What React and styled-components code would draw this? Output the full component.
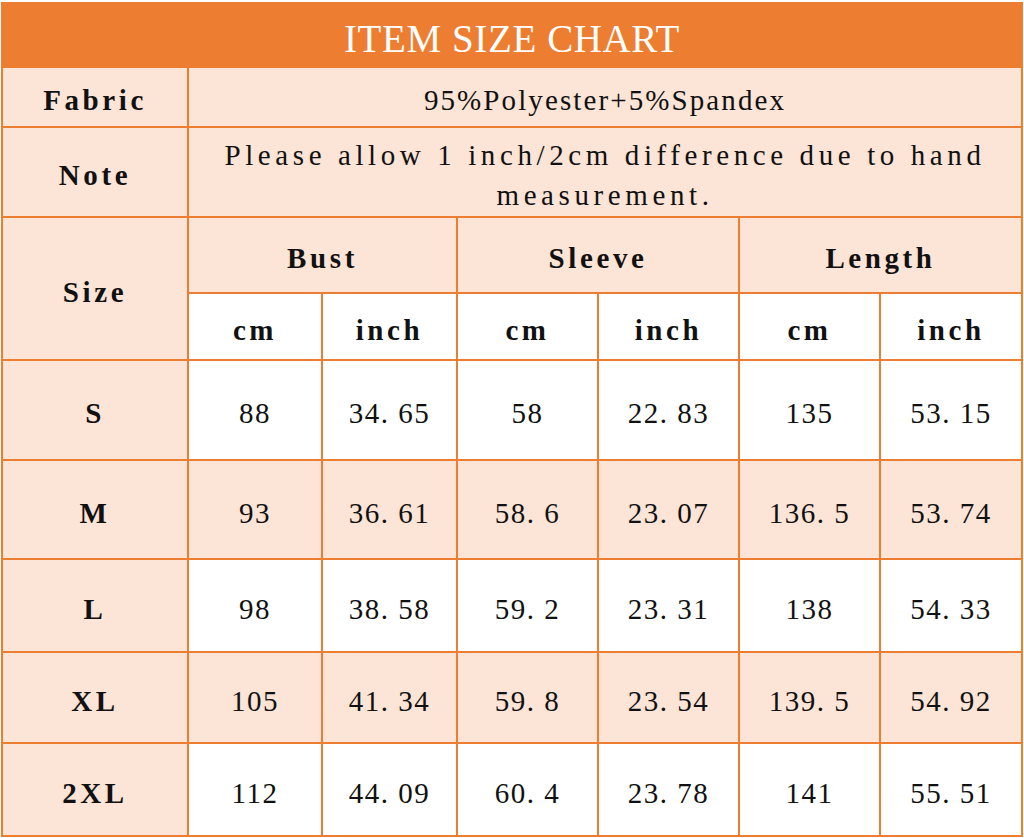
import styled, { createGlobalStyle } from "styled-components";

const GlobalStyle = createGlobalStyle`
  html, body {
    margin: 0;
    padding: 0;
    background: #fff;
  }
`;

const ORANGE = "#ed7d31";
const PEACH = "#fce4d6";

const Page = styled.div`
  width: 1024px;
  height: 838px;
  padding: 2px 0 0 1px;
  box-sizing: border-box;
  overflow: hidden;
`;

const Table = styled.table`
  border-collapse: collapse;
  table-layout: fixed;
  width: 1020px;
  font-family: "Liberation Serif", "DejaVu Serif", serif;
  color: #111;
`;

const TitleCell = styled.th`
  height: 64px;
  padding: 6px 0 0;
  background: ${ORANGE};
  border: 2px solid ${ORANGE};
  color: #fff;
  font-weight: normal;
  font-size: 39px;
  letter-spacing: 0.6px;
  text-align: center;
  vertical-align: middle;
  box-sizing: border-box;
`;

const Cell = styled.td`
  height: ${(p) => p.h}px;
  padding: 6px 0 0;
  border: 2px solid ${ORANGE};
  background: ${(p) => (p.shade ? PEACH : "#fff")};
  font-size: 29px;
  letter-spacing: ${(p) => (p.bold ? "3.6px" : "1.5px")};
  font-weight: ${(p) => (p.bold ? "bold" : "normal")};
  line-height: 40px;
  text-align: center;
  vertical-align: middle;
  box-sizing: border-box;
`;

const FabricText = styled.span`
  letter-spacing: 2.1px;
`;

const NoteText = styled.div`
  padding: 0 20px;
  letter-spacing: 4.6px;
`;

const widths = [186, 134, 135, 141, 141, 141, 142];

const rows = [
  { size: "S", h: 100, shade: false, vals: ["88", "34. 65", "58", "22. 83", "135", "53. 15"] },
  { size: "M", h: 99, shade: true, vals: ["93", "36. 61", "58. 6", "23. 07", "136. 5", "53. 74"] },
  { size: "L", h: 93, shade: false, vals: ["98", "38. 58", "59. 2", "23. 31", "138", "54. 33"] },
  { size: "XL", h: 91, shade: true, vals: ["105", "41. 34", "59. 8", "23. 54", "139. 5", "54. 92"] },
  { size: "2XL", h: 93, shade: false, vals: ["112", "44. 09", "60. 4", "23. 78", "141", "55. 51"] },
];

export default function App() {
  return (
    <Page>
      <GlobalStyle />
      <Table>
        <colgroup>
          {widths.map((w, i) => (
            <col key={i} style={{ width: w }} />
          ))}
        </colgroup>
        <thead>
          <tr>
            <TitleCell colSpan={7}>ITEM SIZE CHART</TitleCell>
          </tr>
        </thead>
        <tbody>
          <tr>
            <Cell h={60} shade bold>Fabric</Cell>
            <Cell h={60} shade colSpan={6}>
              <FabricText>95%Polyester+5%Spandex</FabricText>
            </Cell>
          </tr>
          <tr>
            <Cell h={90} shade bold>Note</Cell>
            <Cell h={90} shade colSpan={6}>
              <NoteText>Please allow 1 inch/2cm difference due to hand measurement.</NoteText>
            </Cell>
          </tr>
          <tr>
            <Cell h={76} shade bold rowSpan={2}>Size</Cell>
            <Cell h={76} shade bold colSpan={2}>Bust</Cell>
            <Cell h={76} shade bold colSpan={2}>Sleeve</Cell>
            <Cell h={76} shade bold colSpan={2}>Length</Cell>
          </tr>
          <tr>
            {["cm", "inch", "cm", "inch", "cm", "inch"].map((u, i) => (
              <Cell key={i} h={67} bold>{u}</Cell>
            ))}
          </tr>
          {rows.map((r) => (
            <tr key={r.size}>
              <Cell h={r.h} shade bold>{r.size}</Cell>
              {r.vals.map((v, i) => (
                <Cell key={i} h={r.h} shade={r.shade}>{v}</Cell>
              ))}
            </tr>
          ))}
        </tbody>
      </Table>
    </Page>
  );
}
